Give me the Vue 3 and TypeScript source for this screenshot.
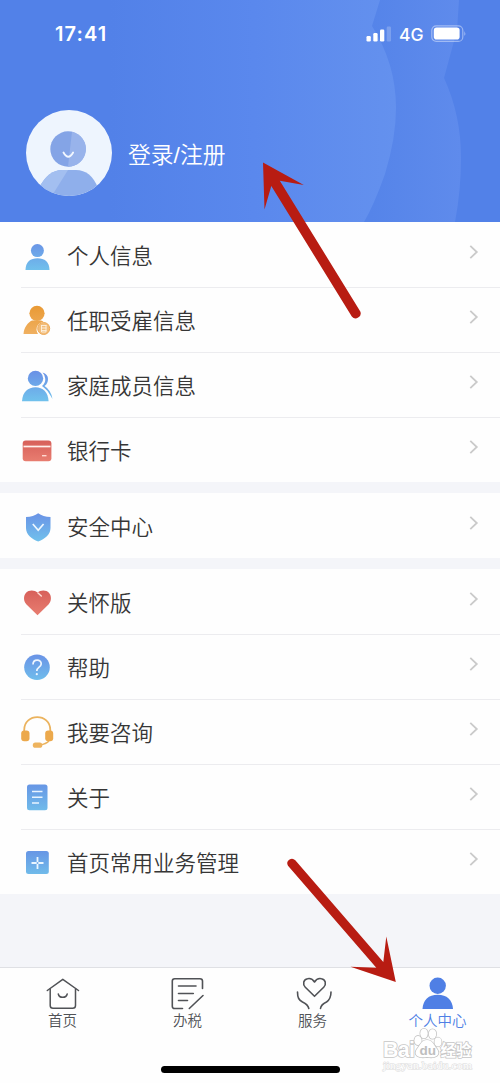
<script setup lang="ts">
interface Row {
  icon: string
  label: string
}

const groups: Row[][] = [
  [
    { icon: 'person', label: '个人信息' },
    { icon: 'job', label: '任职受雇信息' },
    { icon: 'family', label: '家庭成员信息' },
    { icon: 'card', label: '银行卡' },
  ],
  [{ icon: 'shield', label: '安全中心' }],
  [
    { icon: 'heart', label: '关怀版' },
    { icon: 'help', label: '帮助' },
    { icon: 'headset', label: '我要咨询' },
    { icon: 'about', label: '关于' },
    { icon: 'manage', label: '首页常用业务管理' },
  ],
]

const tabs: Row[] = [
  { icon: 'home', label: '首页' },
  { icon: 'tax', label: '办税' },
  { icon: 'service', label: '服务' },
  { icon: 'me', label: '个人中心' },
]
</script>

<template>
  <div class="screen">
    <svg class="defs" width="0" height="0">
      <defs>
        <linearGradient id="blue" x1="0" y1="0" x2="0" y2="1">
          <stop offset="0" stop-color="#6796e5" />
          <stop offset="1" stop-color="#70bbea" />
        </linearGradient>
        <linearGradient id="blueTall" gradientUnits="userSpaceOnUse" x1="0" y1="20" x2="0" y2="48">
          <stop offset="0" stop-color="#6a92e6" />
          <stop offset="1" stop-color="#70c0ec" />
        </linearGradient>
        <linearGradient id="orange" gradientUnits="userSpaceOnUse" x1="0" y1="19" x2="0" y2="48">
          <stop offset="0" stop-color="#e99a35" />
          <stop offset="1" stop-color="#f0b162" />
        </linearGradient>
        <linearGradient id="red" x1="0" y1="0" x2="0" y2="1">
          <stop offset="0" stop-color="#d7605a" />
          <stop offset="1" stop-color="#e87d70" />
        </linearGradient>
      </defs>
    </svg>

    <header class="hero">
      <svg class="hero-bg" viewBox="0 0 500 222" preserveAspectRatio="none">
        <defs>
          <linearGradient id="inner" gradientUnits="userSpaceOnUse" x1="110" y1="0" x2="396" y2="0">
            <stop offset="0" stop-color="#5281e8" />
            <stop offset="0.5" stop-color="#5a88ed" />
            <stop offset="1" stop-color="#6491ee" />
          </linearGradient>
          <linearGradient id="outer" gradientUnits="userSpaceOnUse" x1="370" y1="0" x2="461" y2="0">
            <stop offset="0" stop-color="#5584e9" />
            <stop offset="1" stop-color="#5f8bec" />
          </linearGradient>
        </defs>
        <rect width="500" height="222" fill="#5281e8" />
        <path d="M300 0H459L457 30L444 78Q461 115 461 158Q461 190 455 222H300Z" fill="url(#outer)" />
        <path d="M100 0H380L372 26Q396 64 396 108Q396 138 385 174Q374 205 364 222H100Z" fill="url(#inner)" />
      </svg>
      <div class="status">
        <span class="time">17:41</span>
        <svg class="signal" viewBox="0 0 26 16">
          <rect x="0.5" y="10" width="4.3" height="5.5" rx="1.2" fill="#fff" />
          <rect x="7.3" y="7" width="4.3" height="8.5" rx="1.2" fill="#fff" />
          <rect x="14" y="3.5" width="4.3" height="12" rx="1.2" fill="#fff" />
          <rect x="20.7" y="0.5" width="4.3" height="15" rx="1.2" fill="#fff" opacity=".22" />
        </svg>
        <span class="net">4G</span>
        <svg class="battery" viewBox="0 0 36 18">
          <rect x="0.8" y="0.8" width="31" height="15.6" rx="4.5" fill="none" stroke="#fff" stroke-opacity=".42" stroke-width="1.2" />
          <rect x="2.8" y="2.6" width="25.8" height="12" rx="2.8" fill="#fff" />
          <path d="M33.4 6q1.8 2.5 0 5z" fill="#fff" opacity=".5" />
        </svg>
      </div>
      <div class="login">
        <svg class="avatar" viewBox="0 0 86 86">
          <defs>
            <clipPath id="avatarClip"><circle cx="43" cy="43" r="43" /></clipPath>
          </defs>
          <circle cx="43" cy="43" r="43" fill="#eef5fe" />
          <g clip-path="url(#avatarClip)">
            <circle cx="42" cy="39" r="17.7" fill="#84a4e6" />
            <path d="M46 21.7a17.7 17.7 0 0 1-4 35Z" fill="#98b3eb" />
            <path d="M13 78Q22 60 36 60H50Q65 60 72 78V90H13Z" fill="#8fafeb" />
            <path d="M13 78Q22 60 36 60H42L27 84L13 88Z" fill="#a3bff0" />
          </g>
          <path d="M37.500 42.500q4.800 8.500 9.600 0" fill="none" stroke="#f2f7ff" stroke-width="1.900" stroke-linecap="round" />
        </svg>
        <span class="login-text">登录/注册</span>
      </div>
    </header>

    <main class="list">
      <section v-for="(group, g) in groups" :key="g" class="group">
        <div v-for="row in group" :key="row.label" class="row">
          <svg class="icon" viewBox="0 0 32 65">
            <g v-if="row.icon === 'person'" fill="url(#blueTall)">
              <circle cx="16.400" cy="28.600" r="6.500" />
              <path d="M4.500 48C4.500 40 9.500 36.300 16.500 36.300S28.500 40 28.500 48Z" />
            </g>
            <g v-else-if="row.icon === 'job'">
              <g fill="url(#orange)">
                <circle cx="16" cy="26.300" r="7.600" />
                <path d="M2.500 47C3 40 7 35.500 11 33.500H20L22.500 34.500Q15 37 15.500 43Q16 45.500 17 47Z" />
              </g>
              <circle cx="22.700" cy="41.500" r="6" fill="#f2bd7a" stroke="#efaa58" stroke-width="1" />
              <path d="M20 38.500H25.500M20 41H25.500M20 43.500H25.500M20.500 38V45H25V38" fill="none" stroke="#fdf1df" stroke-width=".9" />
            </g>
            <g v-else-if="row.icon === 'family'" fill="url(#blueTall)">
              <path d="M21.500 20.500Q27 22 27 27Q27 31.500 23.500 34Q30 38 31.500 47Q29.500 43.500 26.500 39Q23 35.500 21 34Q24.500 31 24.300 27Q24.200 23 21.500 20.500Z" />
              <circle cx="14.500" cy="26.400" r="7.700" />
              <path d="M1 49.200C1.500 40 7 35.300 14.500 35.300S27 40 27.600 49.200Z" />
            </g>
            <g v-else-if="row.icon === 'card'">
              <rect x="1.700" y="23.500" width="28.700" height="20.700" rx="3" fill="url(#red)" />
              <path d="M2.500 29.500H29.500" stroke="#fff0ed" stroke-width="1.700" />
              <path d="M21 38.700H25.500" stroke="#ffd8d1" stroke-width="1.400" />
            </g>
            <g v-else-if="row.icon === 'shield'">
              <path d="M17.200 20.200Q22 23.600 29.500 24V35C29.500 41.500 24 46 17.200 48.500C10.500 46 5 41.500 5 35V24Q12.500 23.600 17.200 20.200Z" fill="url(#blueTall)" />
              <path d="M11.800 31L17.200 37.300L22.600 31" fill="none" stroke="#eef7ff" stroke-width="1.700" />
            </g>
            <g v-else-if="row.icon === 'heart'">
              <path d="M16.500 46.200L5.500 35.500C1.500 31.500 2.500 24 7.500 22C11 20.600 14.500 21.800 16.500 23.500C18.500 21.800 22 20.600 25.500 22C30.500 24 31.500 31.500 27.500 35.500Z" fill="url(#red)" />
              <path d="M17 24L20.300 27" stroke="#ffdcd5" stroke-width="1.500" stroke-linecap="round" />
            </g>
            <g v-else-if="row.icon === 'help'">
              <circle cx="16" cy="33.200" r="12.800" fill="url(#blueTall)" />
              <path d="M12 30.500C12 24.500 20.500 25 20.200 30C20 33.300 15.800 33 15.800 37" fill="none" stroke="#eef6ff" stroke-width="1.700" />
              <circle cx="15.800" cy="40.200" r="1.100" fill="#eef6ff" />
            </g>
            <g v-else-if="row.icon === 'headset'">
              <path d="M3.200 33V31C3.200 13.800 29.300 13.800 29.300 31V33" fill="none" stroke="#ebb35e" stroke-width="1.800" />
              <path d="M28 42Q25 45 19 46" fill="none" stroke="#ebb35e" stroke-width="1.500" />
              <rect x="0.200" y="31.500" width="8.300" height="10.800" rx="3" fill="#eca94c" />
              <rect x="24.200" y="31.500" width="8" height="10.800" rx="3" fill="#eca94c" />
              <rect x="11.800" y="43.500" width="9.500" height="5.300" rx="2.600" fill="#eeb45f" />
            </g>
            <g v-else-if="row.icon === 'about'">
              <rect x="6" y="20.500" width="20.500" height="25.800" rx="2.500" fill="url(#blue)" />
              <path d="M11 27.500H21.500M11 33.300H21.500M11 39H18" stroke="#e8f4ff" stroke-width="1.400" />
            </g>
            <g v-else>
              <rect x="5" y="22" width="22.800" height="23" rx="2.500" fill="url(#blue)" />
              <path d="M10.500 34H22.500M16.500 28V40" stroke="#eaf6ff" stroke-width="1.800" />
              <circle cx="16.500" cy="34" r="1" fill="#75aae6" />
            </g>
          </svg>
          <span class="label">{{ row.label }}</span>
          <svg class="chevron" viewBox="0 0 10 16"><path d="M1.300 1.800L7.800 8L1.300 14.200" fill="none" stroke="#cacaca" stroke-width="1.800" /></svg>
        </div>
      </section>
    </main>

    <nav class="tabs">
      <div v-for="tab in tabs" :key="tab.label" class="tab" :class="{ active: tab.icon === 'me' }">
        <svg class="tab-icon" viewBox="0 0 36 36">
          <g v-if="tab.icon === 'home'" fill="none" stroke="#505256" stroke-width="1.500" stroke-linejoin="round" stroke-linecap="round">
            <path d="M2.300 15.500L17.800 4.300L33.500 15.500" />
            <path d="M5.200 14V30.500Q5.200 33.300 8 33.300H27.700Q30.500 33.300 30.500 30.500V14" />
            <path d="M13.300 19Q14 22.300 17.700 22.300T22.200 19" />
          </g>
          <g v-else-if="tab.icon === 'tax'" fill="none" stroke="#505256" stroke-width="1.600" stroke-linejoin="round" stroke-linecap="round">
            <path d="M32.500 13.500V6Q32.500 3.700 30 3.700H4.700Q2.300 3.700 2.300 6V31.200Q2.300 33.500 4.700 33.500H12.500" />
            <path d="M8.500 11H26M8.500 18.500H23.300M8.500 25.500H17.500M33 20.500L19.300 33.500" />
          </g>
          <g v-else-if="tab.icon === 'service'" fill="none" stroke="#505256" stroke-width="1.600" stroke-linejoin="round" stroke-linecap="round">
            <path d="M19.500 21.300L10.300 12.300C7.300 9 8.500 4.500 12.500 3.700C15.500 3 18 4.500 19.500 7C21 4.500 23.500 3 26.500 3.700C30.500 4.500 31.700 9 28.700 12.300Z" />
            <path d="M2.500 17C2.500 23 4 25 7.500 27Q13 29.500 13.800 33.500M36 17C36 23 34.500 25 31.500 27Q26 29.500 25.500 33.500" />
          </g>
          <g v-else fill="#4f7fe5">
            <circle cx="17.700" cy="10.700" r="8.200" />
            <path d="M2.500 34C3 25 8.500 19.800 17.700 19.800S32.500 25 33 34Z" />
          </g>
        </svg>
        <span class="tab-label">{{ tab.label }}</span>
      </div>
    </nav>

    <div class="home-bar"></div>

    <svg class="overlay" viewBox="0 0 500 1083">
      <g font-family="'Liberation Sans','Noto Sans CJK SC',sans-serif" fill="#fff" stroke="#c6c6c6" stroke-width="1.600" paint-order="stroke">
        <text x="383" y="1056.500" font-size="21.500" font-weight="700" textLength="32">Bai</text>
        <ellipse cx="418" cy="1040.500" rx="3.600" ry="4.600" />
        <ellipse cx="424" cy="1033.500" rx="3.700" ry="4.800" />
        <ellipse cx="432.500" cy="1034" rx="3.700" ry="4.800" />
        <ellipse cx="438" cy="1042" rx="3.500" ry="4.400" />
        <path d="M427 1040C421 1040 420 1046 417 1049C413 1055 418 1058.500 427 1057C436 1058.500 441 1055 437 1049C434 1046 433 1040 427 1040Z" />
        <text x="419.500" y="1055" font-size="13.500" font-weight="700" fill="#bebebe" stroke="none">du</text>
        <text x="440.500" y="1056" font-size="15.500" font-weight="700">经验</text>
        <text x="383" y="1069" font-size="11" font-family="'Liberation Serif',serif" stroke="#dcdcdc" stroke-width="1" textLength="89" lengthAdjust="spacingAndGlyphs">jingyan.baidu.com</text>
      </g>
      <g fill="#b81c12">
        <path d="M263 162.500L303.800 185L279.800 180.700L360.300 311.500A5 5 0 0 1 351.800 316.500L271.300 186L264.500 209.500Z" />
        <path d="M395.800 982L350.500 966.800L376.300 967.800L288 865.800A4.600 4.600 0 0 1 295.300 860.300L383.300 962L386.300 936.500Z" />
      </g>
    </svg>
  </div>
</template>

<style>
body {
  margin: 0;
}
</style>

<style scoped>
.screen {
  position: relative;
  display: flex;
  flex-direction: column;
  width: 500px;
  height: 1083px;
  overflow: hidden;
  background: #f4f5f9;
  color: #363636;
  font-family: "Liberation Sans", "Noto Sans CJK SC", sans-serif;
}
.defs {
  position: absolute;
}
.hero {
  position: relative;
  height: 222px;
  flex: none;
  color: #fff;
}
.hero-bg {
  position: absolute;
  inset: 0;
  width: 500px;
  height: 222px;
}
.status {
  position: relative;
  display: flex;
  align-items: center;
  height: 68px;
  padding: 0 33px 0 55px;
}
.time {
  flex: 1;
  font: 600 20px Inter, sans-serif;
  letter-spacing: 1.1px;
}
.signal {
  width: 26px;
  height: 16px;
  margin-right: 7px;
}
.net {
  width: 24px;
  margin-right: 8px;
  font: 500 17.500px Inter, sans-serif;
}
.battery {
  width: 36px;
  height: 18px;
}
.login {
  position: relative;
  display: flex;
  align-items: center;
  padding: 42px 0 0 26px;
}
.avatar {
  width: 86px;
  height: 86px;
}
.login-text {
  margin-left: 16px;
  padding-top: 4px;
  font-size: 22.800px;
  font-weight: 350;
  line-height: 30px;
}
.list {
  display: flex;
  flex-direction: column;
  gap: 11px;
}
.group {
  background: #fefefe;
}
.row {
  display: flex;
  align-items: center;
  height: 65px;
  padding: 0 21px;
}
.row + .row {
  background: linear-gradient(#ececef, #ececef) 21px 0 / 479px 1px no-repeat;
}
.icon {
  width: 32px;
  height: 65px;
  overflow: visible;
}
.label {
  flex: 1;
  margin-left: 14px;
  padding-top: 5px;
  font-size: 21.500px;
  font-weight: 350;
  line-height: 30px;
}
.chevron {
  width: 10px;
  height: 16px;
  margin-bottom: 5px;
}
.tabs {
  display: flex;
  height: 115px;
  margin-top: auto;
  border-top: 1px solid #dfe0e4;
  background: #fefefe;
}
.tab {
  display: flex;
  flex: 1;
  flex-direction: column;
  align-items: center;
  padding-top: 7px;
  color: #505256;
}
.tab-icon {
  width: 36px;
  height: 36px;
  overflow: visible;
}
.tab-label {
  font-size: 14.500px;
  font-weight: 350;
  line-height: 21px;
}
.active {
  color: #4f7fe5;
}
.home-bar {
  position: absolute;
  left: 161px;
  top: 1066px;
  width: 179px;
  height: 7px;
  border-radius: 4px;
  background: #000;
}
.overlay {
  position: absolute;
  inset: 0;
  width: 500px;
  height: 1083px;
  pointer-events: none;
}
</style>
